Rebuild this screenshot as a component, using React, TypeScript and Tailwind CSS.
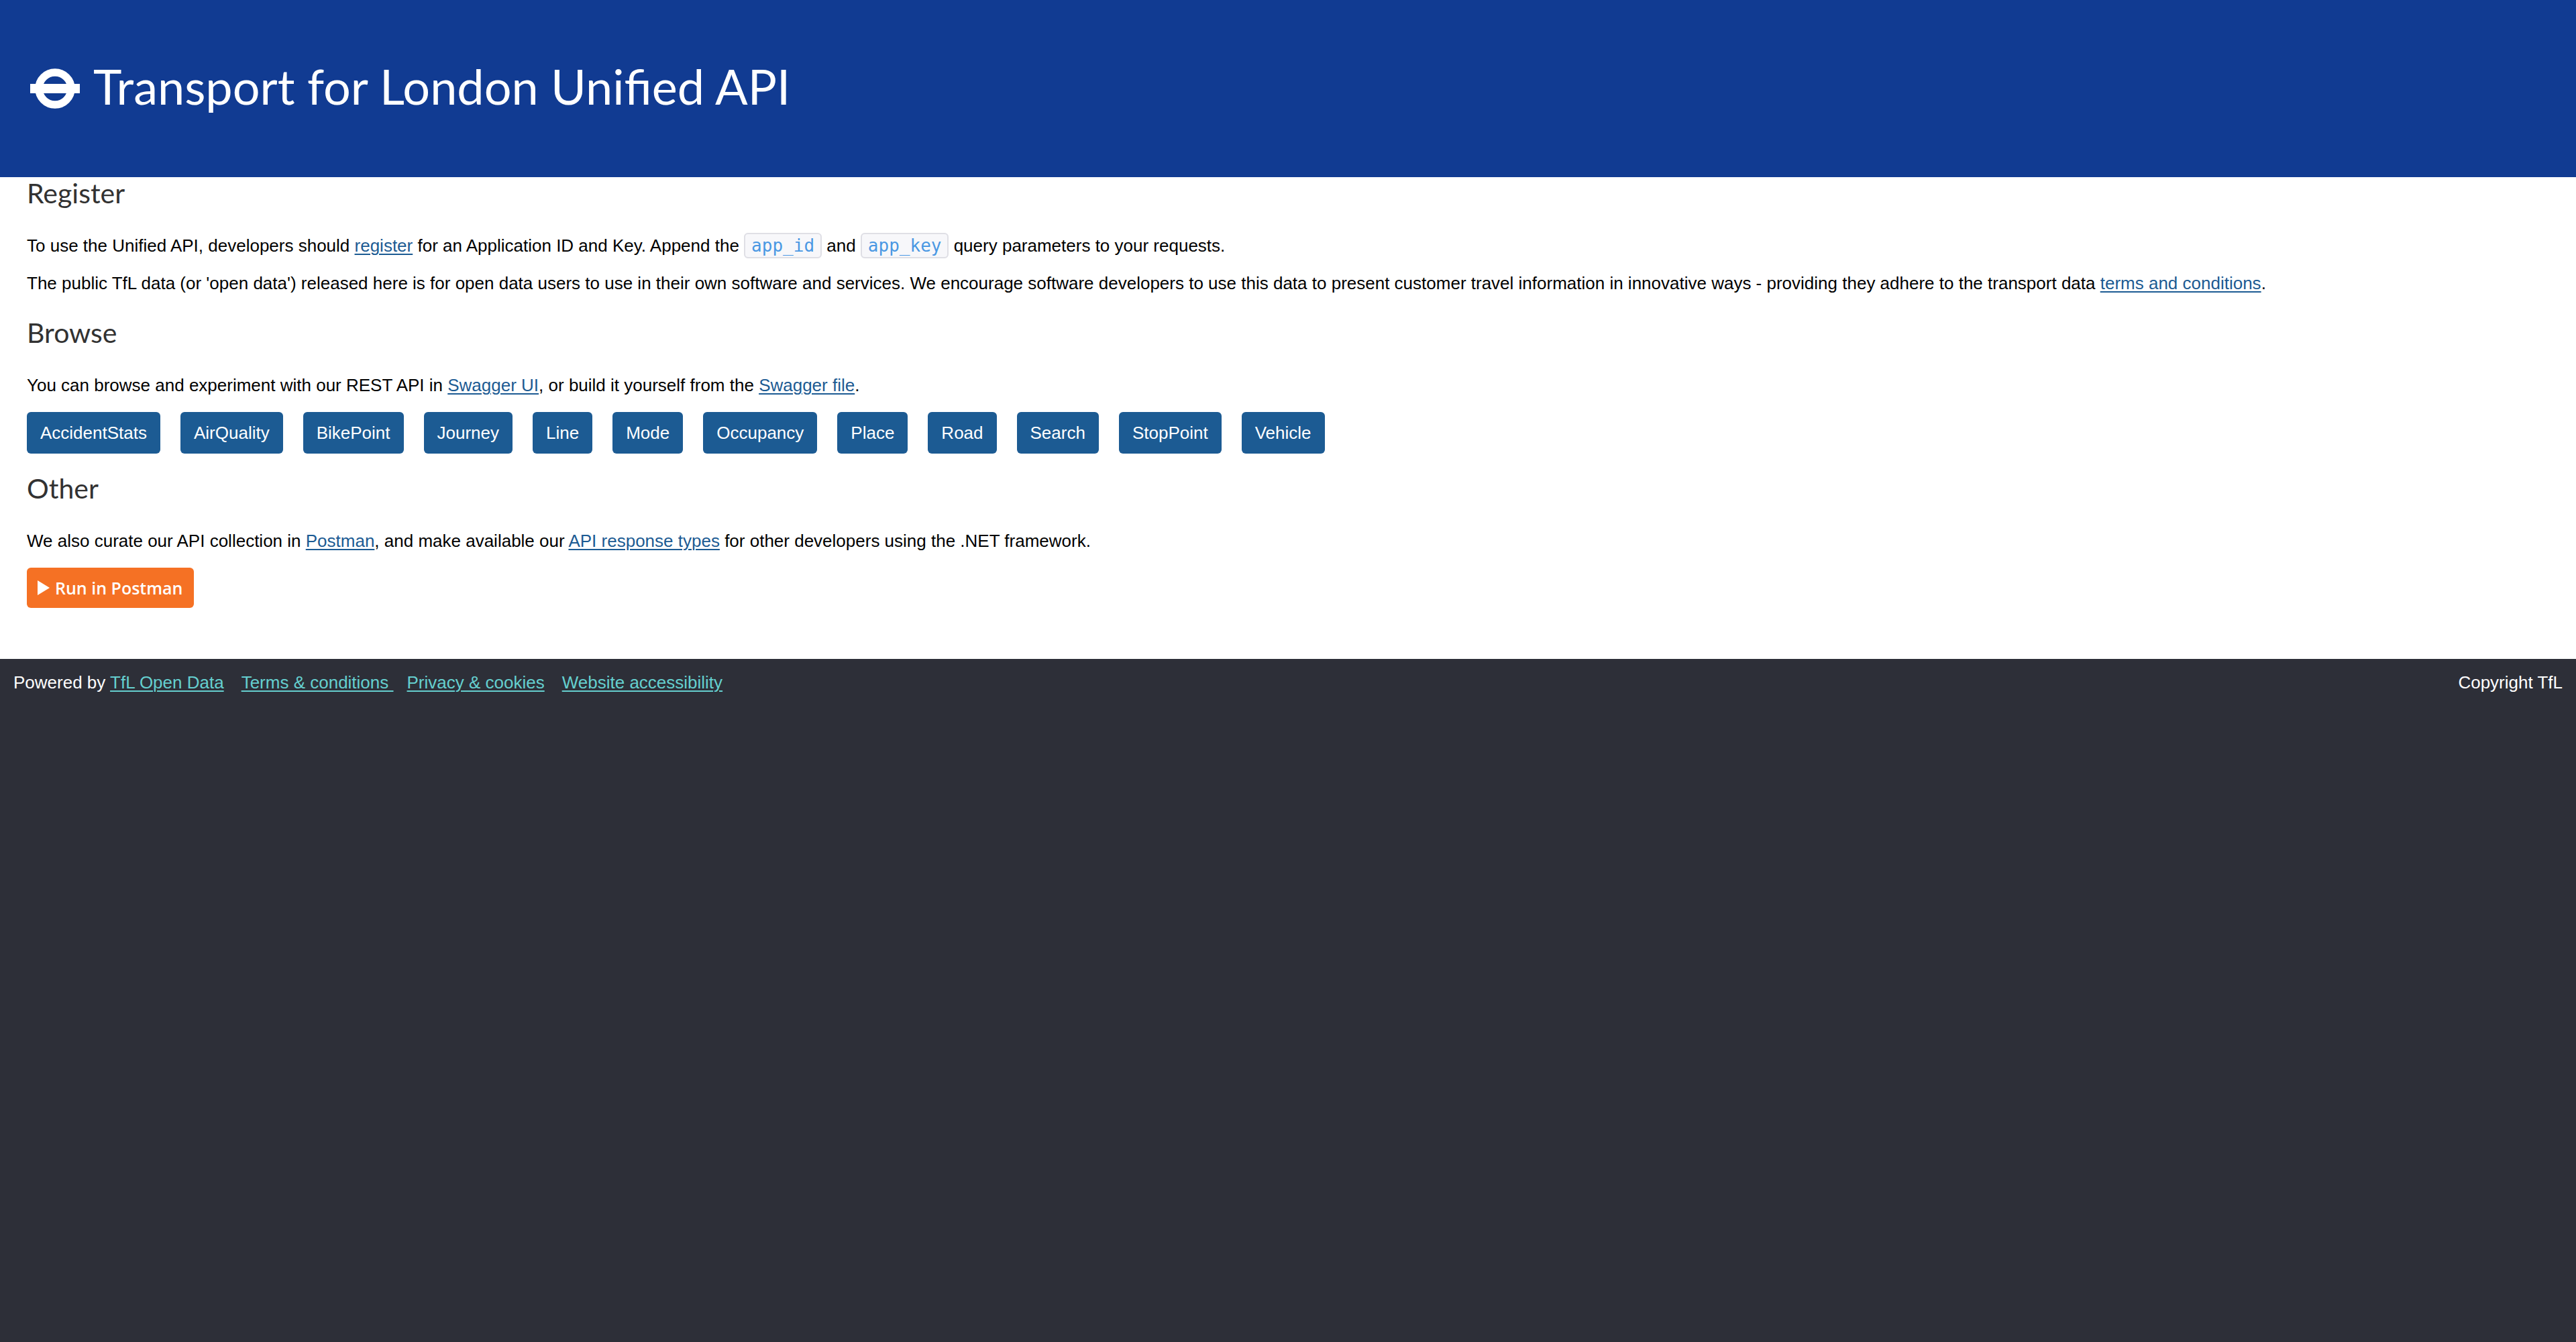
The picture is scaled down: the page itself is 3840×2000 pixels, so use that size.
import type { ReactNode } from "react";

const apis = [
  "AccidentStats",
  "AirQuality",
  "BikePoint",
  "Journey",
  "Line",
  "Mode",
  "Occupancy",
  "Place",
  "Road",
  "Search",
  "StopPoint",
  "Vehicle",
];

function Roundel() {
  return (
    <svg viewBox="0 0 74 60" className="h-[60px] w-[74px] shrink-0" aria-hidden="true">
      <circle cx="37" cy="30" r="24" fill="none" stroke="#fff" strokeWidth="11.5" />
      <rect x="0" y="23" width="74" height="14" fill="#fff" />
    </svg>
  );
}

function Heading({ children }: { children: ReactNode }) {
  return (
    <h2 className="mb-[38px] font-[Lato,sans-serif] text-[41px] leading-[48px] text-[#323232]">
      {children}
    </h2>
  );
}

function Link({ children }: { children: ReactNode }) {
  return (
    <a href="#" className="text-[#1c5b93] underline decoration-2 underline-offset-[3px]">
      {children}
    </a>
  );
}

function FooterLink({ children }: { children: ReactNode }) {
  return (
    <a
      href="#"
      className="whitespace-pre text-[#65cfcf] underline decoration-2 underline-offset-[3px]"
    >
      {children}
    </a>
  );
}

function Code({ children }: { children: ReactNode }) {
  return (
    <code className="rounded-md border-2 border-[#dfdfe5] bg-[#f7f7fa] px-[9px] py-[2px] font-['DejaVu_Sans_Mono',monospace] text-[26px] text-[#4a98e3]">
      {children}
    </code>
  );
}

export default function App() {
  return (
    <div className="flex min-h-screen flex-col bg-[#2d2f38] font-['Liberation_Sans',sans-serif] text-[26px] leading-8 text-black">
      <header className="flex h-[264px] items-start gap-5 bg-[#113b92] px-[45px] pt-[84px]">
        <div className="flex h-24 items-center">
          <Roundel />
        </div>
        <h1 className="font-[Lato,sans-serif] text-[72px] leading-[88px] text-white">
          Transport for London Unified API
        </h1>
      </header>

      <main className="bg-white px-10 pb-[76px]">
        <section className="mb-[34px]">
          <Heading>Register</Heading>
          <p className="mb-6">
            To use the Unified API, developers should <Link>register</Link> for an Application ID
            and Key. Append the <Code>app_id</Code> and <Code>app_key</Code> query parameters to
            your requests.
          </p>
          <p>
            The public TfL data (or 'open data') released here is for open data users to use in
            their own software and services. We encourage software developers to use this data to
            present customer travel information in innovative ways - providing they adhere to the
            transport data <Link>terms and conditions</Link>.
          </p>
        </section>

        <section className="mb-7">
          <Heading>Browse</Heading>
          <p className="mb-6">
            You can browse and experiment with our REST API in <Link>Swagger UI</Link>, or build it
            yourself from the <Link>Swagger file</Link>.
          </p>
          <nav className="flex flex-wrap gap-[30px]">
            {apis.map((name) => (
              <a
                key={name}
                href="#"
                className="flex h-[62px] items-center rounded-md bg-[#1c5b93] px-5 text-white"
              >
                {name}
              </a>
            ))}
          </nav>
        </section>

        <section>
          <Heading>Other</Heading>
          <p className="mb-6">
            We also curate our API collection in <Link>Postman</Link>, and make available our{" "}
            <Link>API response types</Link> for other developers using the .NET framework.
          </p>
          <button
            type="button"
            className="flex h-[60px] items-center gap-2 rounded-md bg-[#f57124] px-4 font-['Open_Sans',sans-serif] text-[25px] font-semibold text-white"
          >
            <svg viewBox="0 0 18 22" className="h-[22px] w-[18px]" aria-hidden="true">
              <path d="M0 0 18 11 0 22Z" fill="#fff" />
            </svg>
            Run in Postman
          </button>
        </section>
      </main>

      <footer className="flex justify-between px-5 pt-[19px] text-white">
        <div className="flex">
          <span className="mr-[26px]">
            Powered by <FooterLink>TfL Open Data</FooterLink>
          </span>
          <span className="mr-5">
            <FooterLink>{"Terms & conditions "}</FooterLink>
          </span>
          <span className="mr-[26px]">
            <FooterLink>{"Privacy & cookies"}</FooterLink>
          </span>
          <FooterLink>Website accessibility</FooterLink>
        </div>
        <span>Copyright TfL</span>
      </footer>
    </div>
  );
}
